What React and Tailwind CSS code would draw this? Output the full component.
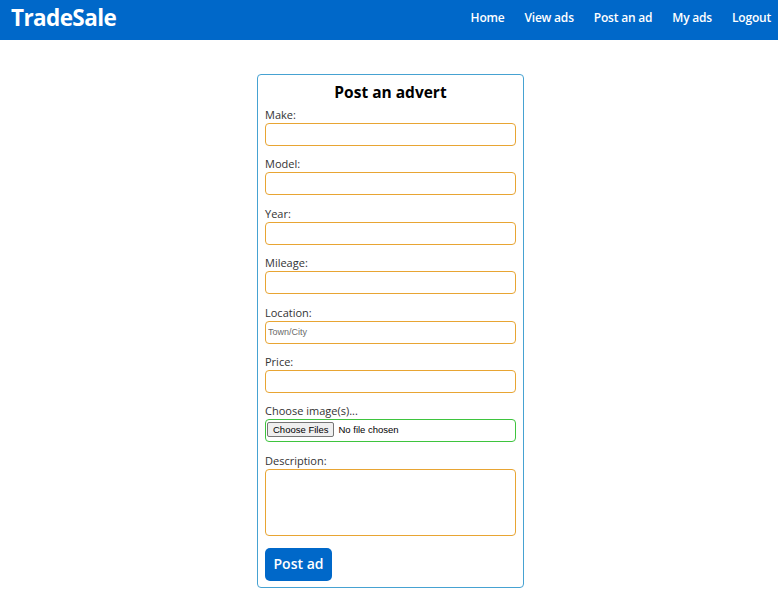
import React from "react";

const labelCls = "block text-[11px] leading-[17px] text-[#333] font-['Open_Sans',sans-serif]";
const inputCls = "block w-full h-[23px] border border-[#e8a533] rounded-[4px] px-[2px] text-[9px] font-['Liberation_Sans',Arial,sans-serif] placeholder:text-[#6b6b6b] outline-none";

function Field({ label, placeholder }) {
  return (
    <div className="mb-[9.4px]">
      <label className={labelCls}>{label}</label>
      <input type="text" placeholder={placeholder} className={inputCls} />
    </div>
  );
}

export default function App() {
  return (
    <div className="min-h-[600px] bg-white">
      <header className="h-[40px] bg-[#0068c9] flex items-center justify-between pl-[11px] pr-[7px]">
        <div className="text-white text-[22.5px] font-bold tracking-[-0.6px] font-['Open_Sans',sans-serif] leading-none -mt-[4px]">
          TradeSale
        </div>
        <nav className="flex gap-[20px] text-white text-[12px] font-semibold tracking-[-0.2px] font-['Open_Sans',sans-serif] -mt-[4px]">
          <span>Home</span>
          <span>View ads</span>
          <span>Post an ad</span>
          <span>My ads</span>
          <span>Logout</span>
        </nav>
      </header>
      <main className="flex justify-center pt-[34px] pl-[3px]">
        <form className="w-[267px] border border-[#46a2d2] rounded-[4px] px-[7px] pt-[4px] pb-[6px]">
          <h1 className="text-center text-[15.5px] font-bold leading-[26px] mb-[1px] text-black font-['Open_Sans',sans-serif]">
            Post an advert
          </h1>
          <Field label="Make:" />
          <Field label="Model:" />
          <Field label="Year:" />
          <Field label="Mileage:" />
          <Field label="Location:" placeholder="Town/City" />
          <Field label="Price:" />
          <div className="mb-[9.4px]">
            <label className={labelCls}>Choose image(s)...</label>
            <input
              type="file"
              multiple
              className="block w-full h-[23px] border border-[#3ec43e] rounded-[4px] text-[9.5px] leading-[14px] py-[2px] font-['Liberation_Sans',Arial,sans-serif] text-black file:bg-[#efefef] file:border file:border-[#767676] file:rounded-[2px] file:px-[5px] file:h-[15px] file:leading-[13px] file:mr-[4px] file:ml-[1px] file:text-[9.5px] file:text-black"
            />
          </div>
          <div>
            <label className={labelCls}>Description:</label>
            <textarea className="block w-full h-[67px] border border-[#e8a533] rounded-[4px] resize-none outline-none" />
          </div>
          <button
            type="button"
            className="mt-[12px] w-[67px] h-[33px] bg-[#0068c9] rounded-[5px] text-white text-[14px] font-semibold leading-[30px] font-['Open_Sans',sans-serif]"
          >
            Post ad
          </button>
        </form>
      </main>
    </div>
  );
}
